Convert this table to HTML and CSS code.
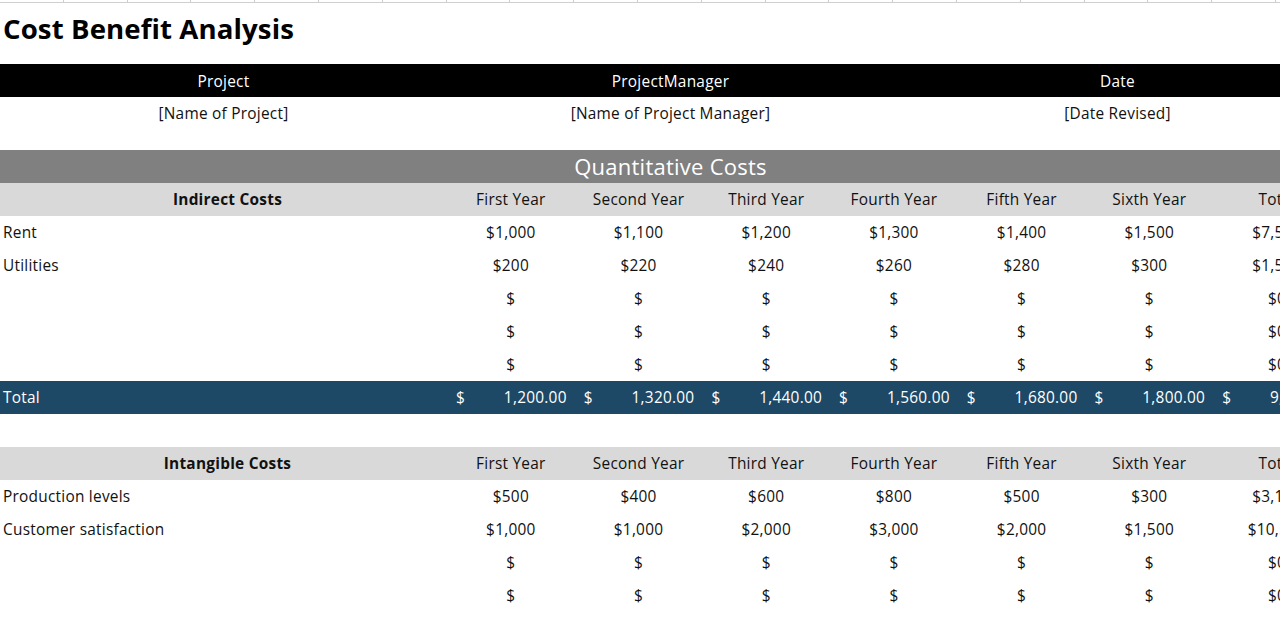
FILE: index.html
```html
<!DOCTYPE html>
<html>
<head>
<meta charset="utf-8">
<link rel="stylesheet" href="styles.css">
</head>
<body>
<div class="sheet">
  <div class="gridstrip"></div>
  <h1 class="title">Cost Benefit Analysis</h1>

  <div class="info head">
    <div>Project</div><div>ProjectManager</div><div>Date</div>
  </div>
  <div class="info vals">
    <div>[Name of Project]</div><div>[Name of Project Manager]</div><div>[Date Revised]</div>
  </div>

  <div class="band">Quantitative Costs</div>

  <div class="table">
    <div class="row colhead">
      <div class="lbl">Indirect Costs</div>
      <div>First Year</div><div>Second Year</div><div>Third Year</div><div>Fourth Year</div><div>Fifth Year</div><div>Sixth Year</div><div>Total</div>
    </div>
    <div class="row">
      <div class="lbl">Rent</div>
      <div>$1,000</div><div>$1,100</div><div>$1,200</div><div>$1,300</div><div>$1,400</div><div>$1,500</div><div>$7,500</div>
    </div>
    <div class="row">
      <div class="lbl">Utilities</div>
      <div>$200</div><div>$220</div><div>$240</div><div>$260</div><div>$280</div><div>$300</div><div>$1,500</div>
    </div>
    <div class="row">
      <div class="lbl"></div>
      <div>$</div><div>$</div><div>$</div><div>$</div><div>$</div><div>$</div><div>$0</div>
    </div>
    <div class="row">
      <div class="lbl"></div>
      <div>$</div><div>$</div><div>$</div><div>$</div><div>$</div><div>$</div><div>$0</div>
    </div>
    <div class="row">
      <div class="lbl"></div>
      <div>$</div><div>$</div><div>$</div><div>$</div><div>$</div><div>$</div><div>$0</div>
    </div>
    <div class="row total">
      <div class="lbl">Total</div>
      <div class="acc"><span>$</span><span>1,200.00</span></div>
      <div class="acc"><span>$</span><span>1,320.00</span></div>
      <div class="acc"><span>$</span><span>1,440.00</span></div>
      <div class="acc"><span>$</span><span>1,560.00</span></div>
      <div class="acc"><span>$</span><span>1,680.00</span></div>
      <div class="acc"><span>$</span><span>1,800.00</span></div>
      <div class="acc"><span>$</span><span>9,000.00</span></div>
    </div>
    <div class="row spacer"></div>
    <div class="row colhead">
      <div class="lbl">Intangible Costs</div>
      <div>First Year</div><div>Second Year</div><div>Third Year</div><div>Fourth Year</div><div>Fifth Year</div><div>Sixth Year</div><div>Total</div>
    </div>
    <div class="row">
      <div class="lbl">Production levels</div>
      <div>$500</div><div>$400</div><div>$600</div><div>$800</div><div>$500</div><div>$300</div><div>$3,100</div>
    </div>
    <div class="row">
      <div class="lbl">Customer satisfaction</div>
      <div>$1,000</div><div>$1,000</div><div>$2,000</div><div>$3,000</div><div>$2,000</div><div>$1,500</div><div>$10,500</div>
    </div>
    <div class="row">
      <div class="lbl"></div>
      <div>$</div><div>$</div><div>$</div><div>$</div><div>$</div><div>$</div><div>$0</div>
    </div>
    <div class="row">
      <div class="lbl"></div>
      <div>$</div><div>$</div><div>$</div><div>$</div><div>$</div><div>$</div><div>$0</div>
    </div>
    <div class="row">
      <div class="lbl"></div>
      <div>$</div><div>$</div><div>$</div><div>$</div><div>$</div><div>$</div><div>$0</div>
    </div>
  </div>
</div>
</body>
</html>
```

FILE: styles.css
```css
html, body {
  margin: 0;
  padding: 0;
  background: #ffffff;
  overflow: hidden;
}
body {
  font-family: "Open Sans", "Liberation Sans", sans-serif;
  font-size: 15.4px;
  letter-spacing: 0.25px;
  color: #111;
}
.sheet {
  width: 1341px;
}
.gridstrip {
  height: 2px;
  border-bottom: 1px solid #cfcfcf;
  background: repeating-linear-gradient(to right, transparent 0 62.8px, #cfcfcf 62.8px 63.8px);
}
.title {
  margin: 0;
  height: 49px;
  padding-bottom: 12px;
  display: flex;
  align-items: center;
  padding-left: 3px;
  font-size: 27.6px;
  font-weight: 700;
  color: #000;
  letter-spacing: 0.1px;
}
.info {
  display: grid;
  grid-template-columns: 447px 447px 447px;
  height: 33px;
}
.info > div {
  display: flex;
  align-items: center;
  justify-content: center;
}
.info.head > div {
  padding-top: 1px;
}
.info.vals > div {
  padding-bottom: 1px;
}
.info.head {
  background: #000;
  color: #fff;
}
.info.vals {
  color: #111;
}
.band {
  margin-top: 20px;
  height: 32px;
  padding-bottom: 1px;
  background: #808080;
  color: #fff;
  font-size: 22px;
  display: flex;
  align-items: center;
  justify-content: center;
}
.row {
  display: grid;
  grid-template-columns: 447px repeat(7, 127.7px);
  height: 33px;
}
.row > div {
  display: flex;
  align-items: center;
  justify-content: center;
  padding-bottom: 1px;
  white-space: nowrap;
}
.row > .lbl {
  justify-content: flex-start;
  padding-left: 3px;
}
.colhead {
  background: #d9d9d9;
}
.colhead > .lbl {
  justify-content: center;
  padding-left: 8px;
  font-weight: 700;
}
.total {
  background: #1d4866;
  color: #fff;
}
.total > .acc {
  justify-content: space-between;
  padding: 0 8px 1px 9px;
}
```
